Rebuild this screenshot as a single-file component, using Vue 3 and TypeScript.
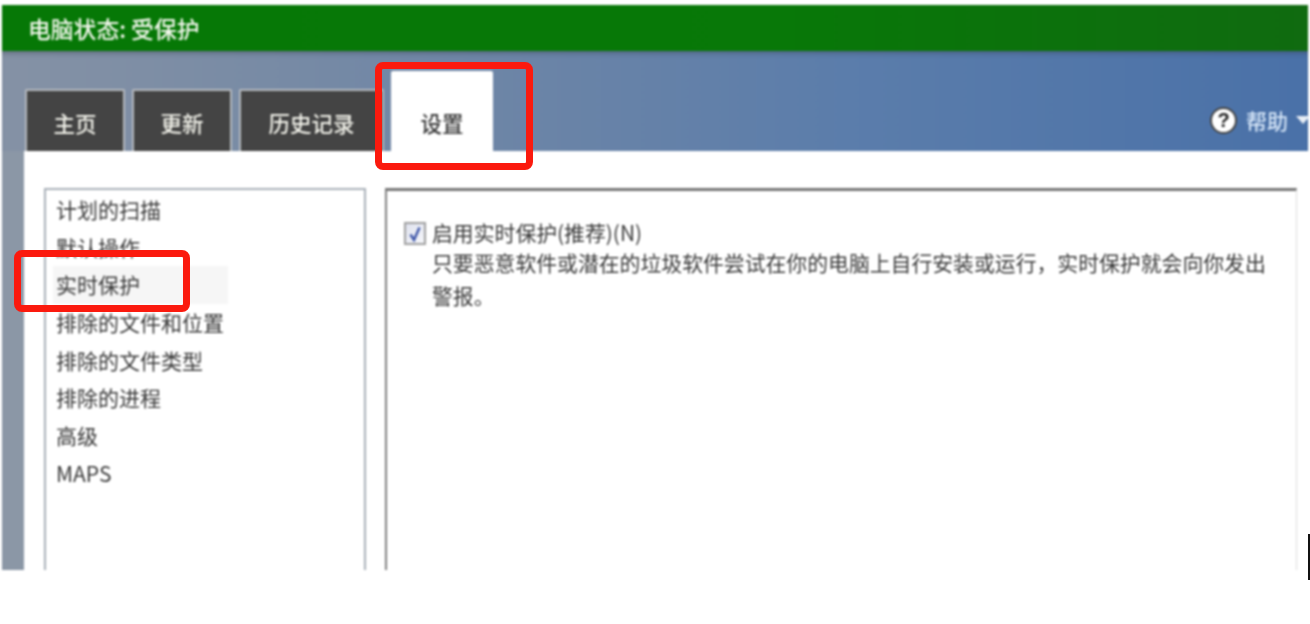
<script setup lang="ts">
const tabs = ['主页', '更新', '历史记录']
const menu = ['计划的扫描', '默认操作', '实时保护', '排除的文件和位置', '排除的文件类型', '排除的进程', '高级', 'MAPS']
const activeItem = '实时保护'
</script>

<template>
  <div class="page">
    <div class="window">
      <header class="status">电脑状态: 受保护</header>
      <nav class="band">
        <div v-for="tab in tabs" :key="tab" class="tab">{{ tab }}</div>
        <div class="tab active">设置</div>
        <div class="help">
          <span class="help-icon">?</span>
          <span class="help-label">帮助</span>
          <span class="caret"></span>
        </div>
      </nav>
      <main class="body">
        <ul class="menu">
          <li v-for="item in menu" :key="item" :class="{ current: item === activeItem }">{{ item }}</li>
        </ul>
        <section class="panel">
          <div class="option">
            <span class="checkbox">
              <svg width="16" height="18" viewBox="0 0 16 18">
                <path d="M3.5 9.5 L7 15 L12.5 2.5" fill="none" stroke="#3d55a8" stroke-width="2.4" />
              </svg>
            </span>
            <div class="option-text">
              <div class="option-title">启用实时保护(推荐)(N)</div>
              <p class="option-desc">只要恶意软件或潜在的垃圾软件尝试在你的电脑上自行安装或运行，实时保护就会向你发出警报。</p>
            </div>
          </div>
        </section>
      </main>
    </div>
    <div class="mark mark-tab"></div>
    <div class="mark mark-item"></div>
    <div class="cursor-line"></div>
  </div>
</template>

<style>
html,
body {
  background: #fff;
}
</style>

<style scoped>
.page {
  position: relative;
  height: 624px;
  overflow: hidden;
  background: #fff;
  font-family: "Noto Sans CJK SC", "Noto Sans", sans-serif;
  color: #3a3a3a;
}
.window {
  margin: 5px 2px 0;
  height: 565px;
  display: flex;
  flex-direction: column;
  background: #8b97a6;
  filter: blur(0.8px);
}
.status {
  height: 46px;
  flex: none;
  box-sizing: border-box;
  padding-left: 26px;
  background: linear-gradient(90deg, #067806, #087808 60%, #106b10);
  color: #f4f8ee;
  font-size: 22.8px;
  font-weight: 500;
  line-height: 47px;
}
.band {
  height: 100px;
  flex: none;
  display: flex;
  align-items: flex-end;
  padding-left: 23px;
  background: linear-gradient(90deg, #8592a5 0%, #6f86a6 35%, #5b7dab 65%, #4a71a8 100%);
  box-shadow: inset 0 5px 5px -3px rgba(50, 60, 70, 0.45);
}
.tab {
  box-sizing: border-box;
  height: 62px;
  padding-top: 12px;
  margin-right: 7px;
  width: 100px;
  text-align: center;
  background: #444;
  border: 2px solid #b4b8bd;
  border-bottom: 0;
  border-radius: 2px 2px 0 0;
  color: #f2f2ea;
  font-size: 21.5px;
  font-weight: 500;
  line-height: 40px;
}
.tab:nth-child(3) {
  width: 145px;
}
.tab.active {
  width: 102px;
  height: 80px;
  padding-top: 32px;
  background: #fff;
  border: 0;
  color: #3c3c3c;
}
.help {
  margin-left: auto;
  height: 62px;
  display: flex;
  align-items: center;
  margin-right: -2px;
  box-sizing: border-box;
  color: #d6e6f8;
  font-size: 21px;
  font-weight: 500;
}
.help-icon {
  box-sizing: border-box;
  width: 27px;
  height: 27px;
  border-radius: 50%;
  background: #fff;
  border: 2px solid #444;
  color: #222;
  font-family: "Liberation Sans", sans-serif;
  font-size: 20px;
  font-weight: 700;
  line-height: 23px;
  text-align: center;
}
.help-label {
  margin-left: 9px;
  line-height: 24px;
}
.caret {
  margin-left: 8px;
  border-top: 8px solid #e8eef6;
  border-left: 7px solid transparent;
  border-right: 7px solid transparent;
}
.body {
  flex: 1;
  min-height: 0;
  margin-left: 22px;
  display: flex;
  gap: 19px;
  padding: 37px 11px 0 20px;
  background: #fff;
  overflow: hidden;
}
.menu {
  box-sizing: border-box;
  width: 322px;
  flex: none;
  margin: 0;
  padding: 1px 0 0 7px;
  list-style: none;
  border: 2px solid #a9b0b8;
  border-bottom: 0;
  font-size: 21px;
}
.menu li {
  height: 37.7px;
  line-height: 37.7px;
  width: 172px;
  padding-left: 3px;
  white-space: nowrap;
}
.menu li.current {
  background: #f6f6f6;
}
.panel {
  flex: 1;
  box-sizing: border-box;
  padding: 28px 16px 0 18px;
  border-top: 3px solid #777;
  border-left: 2px solid #808080;
  border-right: 1px solid #ddd;
}
.option {
  display: flex;
  align-items: flex-start;
  gap: 5px;
}
.checkbox {
  box-sizing: border-box;
  flex: none;
  width: 22px;
  height: 23px;
  margin-top: 3px;
  margin-left: -1px;
  display: flex;
  align-items: center;
  justify-content: center;
  border: 2px solid #a0a0a0;
  background: linear-gradient(135deg, #dfe2ee, #f5f6fa);
}
.option-text {
  font-size: 20.85px;
  margin-left: 1px;
}
.option-title {
  line-height: 27px;
}
.option-desc {
  margin: 0;
  line-height: 33px;
}
.mark {
  position: absolute;
  box-sizing: border-box;
  border: 7px solid #fb1a0e;
  border-radius: 8px;
  filter: blur(0.4px);
}
.mark-tab {
  left: 375px;
  top: 62px;
  width: 158px;
  height: 108px;
}
.mark-item {
  left: 14px;
  top: 250px;
  width: 176px;
  height: 62px;
}
.cursor-line {
  position: absolute;
  left: 1308px;
  top: 534px;
  width: 2px;
  height: 46px;
  background: #111;
}
</style>
